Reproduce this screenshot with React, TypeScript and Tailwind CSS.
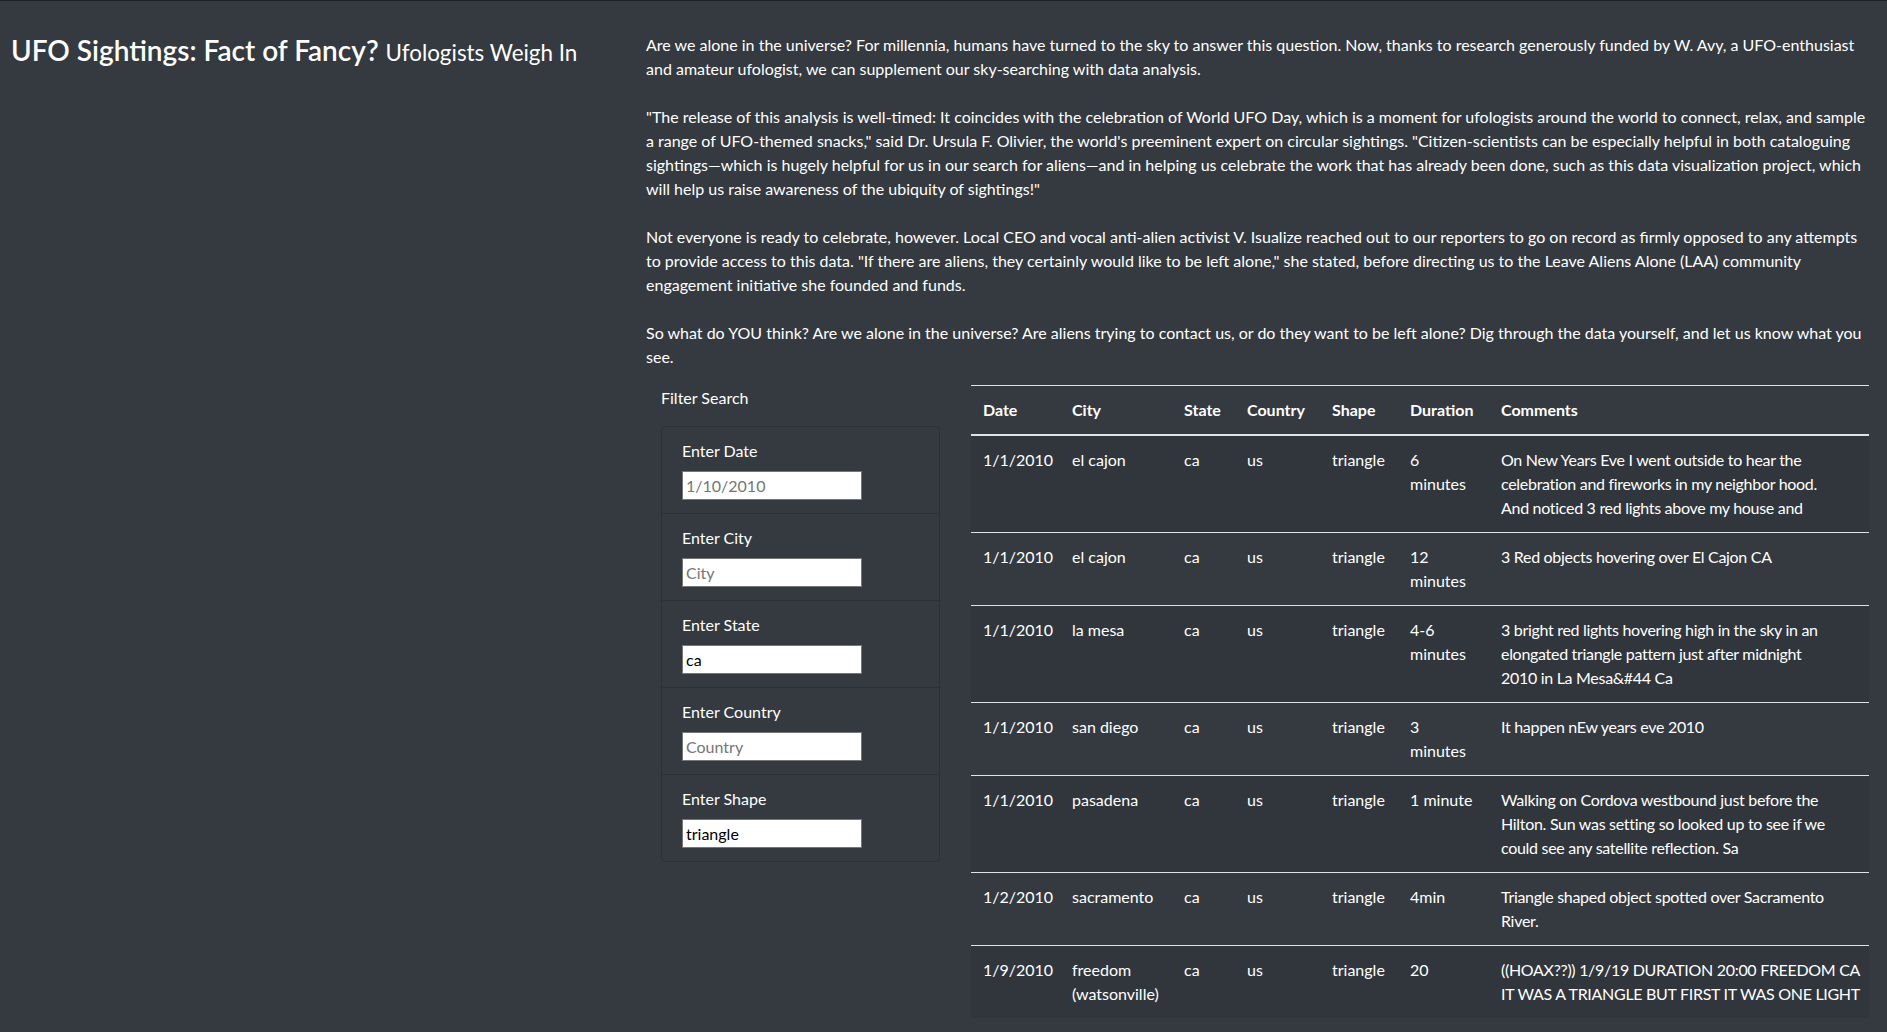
import React from "react";

const paragraphs: string[][] = [
    [
        "Are we alone in the universe? For millennia, humans have turned to the sky to answer this question. Now, thanks to research generously funded by W. Avy, a UFO-enthusiast",
        "and amateur ufologist, we can supplement our sky-searching with data analysis.",
    ],
    [
        "\"The release of this analysis is well-timed: It coincides with the celebration of World UFO Day, which is a moment for ufologists around the world to connect, relax, and sample",
        "a range of UFO-themed snacks,\" said Dr. Ursula F. Olivier, the world's preeminent expert on circular sightings. \"Citizen-scientists can be especially helpful in both cataloguing",
        "sightings\u2014which is hugely helpful for us in our search for aliens\u2014and in helping us celebrate the work that has already been done, such as this data visualization project, which",
        "will help us raise awareness of the ubiquity of sightings!\"",
    ],
    [
        "Not everyone is ready to celebrate, however. Local CEO and vocal anti-alien activist V. Isualize reached out to our reporters to go on record as firmly opposed to any attempts",
        "to provide access to this data. \"If there are aliens, they certainly would like to be left alone,\" she stated, before directing us to the Leave Aliens Alone (LAA) community",
        "engagement initiative she founded and funds.",
    ],
    [
        "So what do YOU think? Are we alone in the universe? Are aliens trying to contact us, or do they want to be left alone? Dig through the data yourself, and let us know what you",
        "see.",
    ],
];

type Sighting = {
    date: string, city: string, state: string, country: string,
    shape: string, duration: string, comments: string
};

const sightings: Sighting[] = [
    {date: "1/1/2010", city: "el cajon", state: "ca", country: "us", shape: "triangle", duration: "6\nminutes",
        comments: "On New Years Eve I went outside to hear the\ncelebration and fireworks in my neighbor hood.\nAnd noticed 3 red lights above my house and"},
    {date: "1/1/2010", city: "el cajon", state: "ca", country: "us", shape: "triangle", duration: "12\nminutes",
        comments: "3 Red objects hovering over El Cajon CA"},
    {date: "1/1/2010", city: "la mesa", state: "ca", country: "us", shape: "triangle", duration: "4-6\nminutes",
        comments: "3 bright red lights hovering high in the sky in an\nelongated triangle pattern just after midnight\n2010 in La Mesa&#44 Ca"},
    {date: "1/1/2010", city: "san diego", state: "ca", country: "us", shape: "triangle", duration: "3\nminutes",
        comments: "It happen nEw years eve 2010"},
    {date: "1/1/2010", city: "pasadena", state: "ca", country: "us", shape: "triangle", duration: "1 minute",
        comments: "Walking on Cordova westbound just before the\nHilton. Sun was setting so looked up to see if we\ncould see any satellite reflection. Sa"},
    {date: "1/2/2010", city: "sacramento", state: "ca", country: "us", shape: "triangle", duration: "4min",
        comments: "Triangle shaped object spotted over Sacramento\nRiver."},
    {date: "1/9/2010", city: "freedom\n(watsonville)", state: "ca", country: "us", shape: "triangle", duration: "20",
        comments: "((HOAX??)) 1/9/19 DURATION 20:00 FREEDOM CA\nIT WAS A TRIANGLE BUT FIRST IT WAS ONE LIGHT"},
];

const filters = [
    {label: "Enter Date", placeholder: "1/10/2010", value: ""},
    {label: "Enter City", placeholder: "City", value: ""},
    {label: "Enter State", placeholder: "State", value: "ca"},
    {label: "Enter Country", placeholder: "Country", value: ""},
    {label: "Enter Shape", placeholder: "Shape", value: "triangle"},
];

const headers = ["Date", "City", "State", "Country", "Shape", "Duration", "Comments"];
const widths = ["w-[89px]", "w-[112px]", "w-[63px]", "w-[85px]", "w-[78px]", "w-[91px]", "w-[380px]"];

const FilterItem = ({label, placeholder, value}: { label: string, placeholder: string, value: string }) => (
    <li className="pl-5 pr-5 pt-3 pb-[13px] border-b border-[#2c3136] last:border-b-0">
        <label className="block leading-6 mb-2">{label}</label>
        <input
            type="text"
            placeholder={placeholder}
            defaultValue={value}
            className="block w-[180px] h-[29px] bg-white text-black border border-[#767676] px-[3px] text-[16px] placeholder:text-[#757575] outline-none"
        />
    </li>
);

export default function App() {
    return (
        <div className="h-screen overflow-hidden bg-[#343a40] text-white border-t border-[#1c1f23] font-['Lato','Liberation_Sans',sans-serif] text-[16px] leading-6">
            <div className="flex">
                <div className="w-[646px] shrink-0 pl-[11px] pt-[33px]">
                    <h1 className="text-[28px] leading-[1.2] font-semibold whitespace-nowrap">
                        UFO Sightings: Fact of Fancy? <small className="text-[22.4px] font-normal">Ufologists Weigh In</small>
                    </h1>
                </div>
                <div className="flex-1 pt-[32px] pr-[3px]">
                    {paragraphs.map((lines, i) => (
                        <p key={i} className={i === paragraphs.length - 1 ? "mb-4" : "mb-6"}>
                            {lines.map((line, j) => (
                                <span key={j} className="block whitespace-nowrap">{line}</span>
                            ))}
                        </p>
                    ))}
                    <div className="flex">
                        <div className="w-[325px] shrink-0 pl-[15px]">
                            <div className="leading-6 pt-px mb-4">Filter Search</div>
                            <ul className="w-[279px] border border-[#2c3136] rounded">
                                {filters.map(f => <FilterItem key={f.label} {...f}/>)}
                            </ul>
                        </div>
                        <table className="w-[898px] table-fixed border-collapse">
                            <colgroup>
                                {widths.map((w, i) => <col key={i} className={w}/>)}
                            </colgroup>
                            <thead>
                            <tr>
                                {headers.map(h => (
                                    <th key={h} className="text-left font-bold px-3 py-3 border-t border-b-2 border-[#dee2e6] align-bottom">{h}</th>
                                ))}
                            </tr>
                            </thead>
                            <tbody>
                            {sightings.map((s, i) => (
                                <tr key={i} className="odd:bg-[#31363c]">
                                    {[s.date, s.city, s.state, s.country, s.shape, s.duration].map((v, j) => (
                                        <td key={j} className="px-3 py-3 border-t border-[#dee2e6] align-top whitespace-pre">{v}</td>
                                    ))}
                                    <td className="px-3 py-3 border-t border-[#dee2e6] align-top whitespace-pre tracking-[-0.3px]">{s.comments}</td>
                                </tr>
                            ))}
                            </tbody>
                        </table>
                    </div>
                </div>
            </div>
        </div>
    );
}
